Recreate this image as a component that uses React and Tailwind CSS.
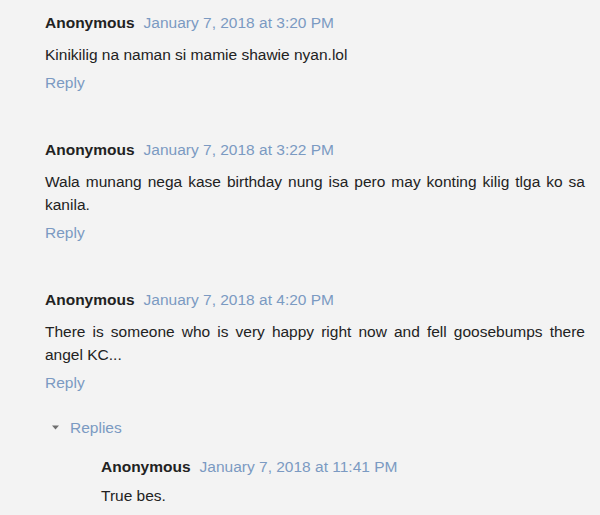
export default function App() {
  const comments = [
    {
      date: "January 7, 2018 at 3:20 PM",
      text: "Kinikilig na naman si mamie shawie nyan.lol",
    },
    {
      date: "January 7, 2018 at 3:22 PM",
      text: "Wala munang nega kase birthday nung isa pero may konting kilig tlga ko sa kanila.",
    },
    {
      date: "January 7, 2018 at 4:20 PM",
      text: "There is someone who is very happy right now and fell goosebumps there angel KC...",
    },
  ];

  return (
    <div className="min-h-[515px] w-[600px] overflow-hidden bg-[#f3f3f3] font-['Liberation_Sans',Arial,sans-serif] text-[15.5px] leading-[23px] text-[#222]">
      <div className="pl-[45px] pr-[15px] pt-[11px]">
        {comments.map((c, i) => (
          <div key={i} className={i < 2 ? "mb-[44px]" : ""}>
            <div className="flex gap-[9px]">
              <span className="font-bold text-[#222]">Anonymous</span>
              <span className="text-[#7b9ac2]">{c.date}</span>
            </div>
            <p className="mt-[9px] text-justify">{c.text}</p>
            <div className="mt-[5px] text-[#7b9ac2]">Reply</div>
          </div>
        ))}

        {/* replies thread */}
        <div className="mt-[22px] flex items-center gap-[11px] pl-[7px]">
          <svg width="7" height="5" viewBox="0 0 7 5">
            <path d="M0 0.5 L7 0.5 L3.5 4.5 Z" fill="#6f6f6f" />
          </svg>
          <span className="text-[#7b9ac2]">Replies</span>
        </div>
        <div className="mt-[16px] pl-[56px]">
          <div className="flex gap-[9px]">
            <span className="font-bold text-[#222]">Anonymous</span>
            <span className="text-[#7b9ac2]">January 7, 2018 at 11:41 PM</span>
          </div>
          <p className="mt-[6px]">True bes.</p>
        </div>
      </div>
    </div>
  );
}
